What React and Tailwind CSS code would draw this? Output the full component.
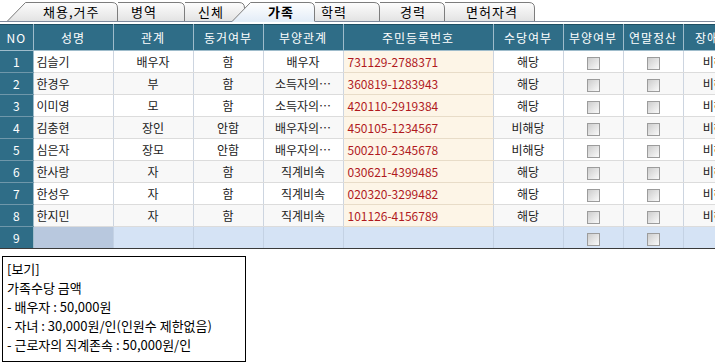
const tabs = [
  { label: '채용,거주', w: 111, pl: 36, first: true },
  { label: '병역', w: 67, pl: 13 },
  { label: '신체', w: 60, pl: 13 },
  { label: '가족', w: 83, pl: 36, active: true, ml: -13 },
  { label: '학력', w: 65, pl: 6 },
  { label: '경력', w: 65, pl: 20 },
  { label: '면허자격', w: 90, pl: 21 },
];

const rows = [
  ['김슬기', '배우자', '함', '배우자', '731129-2788371', '해당'],
  ['한경우', '부', '함', '소득자의…', '360819-1283943', '해당'],
  ['이미영', '모', '함', '소득자의…', '420110-2919384', '해당'],
  ['김충현', '장인', '안함', '배우자의…', '450105-1234567', '비해당'],
  ['심은자', '장모', '안함', '배우자의…', '500210-2345678', '비해당'],
  ['한사랑', '자', '함', '직계비속', '030621-4399485', '해당'],
  ['한성우', '자', '함', '직계비속', '020320-3299482', '해당'],
  ['한지민', '자', '함', '직계비속', '101126-4156789', '해당'],
];

const headers = ['NO', '성명', '관계', '동거여부', '부양관계', '주민등록번호', '수당여부', '부양여부', '연말정산', '장애여부'];
const widths = [33, 80, 80, 70, 80, 150, 70, 60, 60, 72];

function Tab({ tab, idx }) {
  const { w, first, active } = tab;
  const h = active ? 22 : 21;
  const slant = first || active;
  const fill = slant
    ? `M0,${h} L18,2.5 H${w - 6} Q${w - 0.5},2.5 ${w - 0.5},8 V${h} Z`
    : `M0,${h} V2.5 H${w - 6} Q${w - 0.5},2.5 ${w - 0.5},8 V${h} Z`;
  const stroke = slant
    ? `M0.5,21 L18.5,2.5 H${w - 6} Q${w - 0.5},2.5 ${w - 0.5},8 V21`
    : `M0,2.5 H${w - 6} Q${w - 0.5},2.5 ${w - 0.5},8 V21`;
  return (
    <div
      className={`relative shrink-0 ${active ? 'z-10 h-[22px] -mb-[1px]' : 'h-[21px]'}`}
      style={{ width: w, marginLeft: tab.ml || 0 }}
    >
      <svg className="absolute inset-0" width={w} height={h}>
        <defs>
          <linearGradient id={`tg${idx}`} x1="0" y1="0" x2="0" y2="1">
            <stop offset="0" stopColor={active ? '#ffffff' : '#fdfdfd'} />
            <stop offset="1" stopColor={active ? '#e2ecf7' : '#e3e3e3'} />
          </linearGradient>
        </defs>
        <path d={fill} fill={`url(#tg${idx})`} />
        <path d={stroke} fill="none" stroke="#7d7d7d" strokeWidth="1" />
      </svg>
      <span
        className={`relative block pt-[2px] leading-[19px] text-[13px] tracking-[1px] text-black ${active ? 'font-bold' : ''}`}
        style={{ paddingLeft: tab.pl }}
      >
        {tab.label}
      </span>
    </div>
  );
}

function Check() {
  return (
    <span className="inline-block align-middle w-[13px] h-[13px] border border-[#9c9c9c] bg-gradient-to-br from-[#cdcdcd] to-[#fafafa]" />
  );
}

export default function App() {
  return (
    <div className="w-[715px] h-[364px] overflow-hidden bg-white font-['Noto_Sans_CJK_KR','Noto_Sans',sans-serif] text-[12px] text-[#222]">
      {/* 탭 */}
      <div className="flex h-[22px] pl-[7px] border-b border-[#7f8a9c]">
        {tabs.map((t, i) => (
          <Tab key={t.label} tab={t} idx={i} />
        ))}
      </div>

      {/* 가족 테이블 */}
      <div className="mt-[2px] w-[715px] overflow-hidden">
        <table className="table-fixed border-collapse w-[755px]">
          <colgroup>
            {widths.map((w, i) => (
              <col key={i} style={{ width: w }} />
            ))}
          </colgroup>
          <thead>
            <tr className="h-[26px] bg-[#2f6d87] text-white">
              {headers.map((h) => (
                <th
                  key={h}
                  className="p-0 font-normal text-center whitespace-nowrap tracking-[1px] border-r border-b border-[#9fbccb] border-t border-t-[#1f4f63]"
                >
                  {h}
                </th>
              ))}
            </tr>
          </thead>
          <tbody>
            {rows.map((r, i) => (
              <tr key={i} className={`h-[22px] ${i % 2 ? 'bg-[#f8f8f8]' : 'bg-white'}`}>
                <td className="p-0 text-center text-white bg-[#2f6d87] border-r border-[#9fbccb] border-b border-b-[#6f97aa]">{i + 1}</td>
                <td className="p-0 pl-[3px] whitespace-nowrap border-r border-b border-r-[#cdd5e0] border-b-[#dcdcdc]">{r[0]}</td>
                <td className="p-0 text-center whitespace-nowrap border-r border-b border-r-[#cdd5e0] border-b-[#dcdcdc]">{r[1]}</td>
                <td className="p-0 text-center whitespace-nowrap border-r border-b border-r-[#cdd5e0] border-b-[#dcdcdc]">{r[2]}</td>
                <td className="p-0 text-center whitespace-nowrap border-r border-b border-r-[#cdd5e0] border-b-[#dcdcdc]">{r[3]}</td>
                <td className="p-0 pl-[4px] whitespace-nowrap text-[#b0191e] bg-[#fdf5e7] border-r border-b border-r-[#cdd5e0] border-b-[#e8dcc8]">{r[4]}</td>
                <td className="p-0 text-center whitespace-nowrap border-r border-b border-r-[#cdd5e0] border-b-[#dcdcdc]">{r[5]}</td>
                <td className="p-0 text-center border-r border-b border-r-[#cdd5e0] border-b-[#dcdcdc]"><Check /></td>
                <td className="p-0 text-center border-r border-b border-r-[#cdd5e0] border-b-[#dcdcdc]"><Check /></td>
                <td className="p-0 text-center whitespace-nowrap border-b border-b-[#dcdcdc]">비해당</td>
              </tr>
            ))}
            <tr className="h-[22px] bg-[#d5e3f5]">
              <td className="p-0 text-center text-white bg-[#2f6d87] border-r border-[#9fbccb] border-b border-b-[#3a3a3a]">9</td>
              <td className="p-0 bg-[#b8c8de] border-r border-b border-r-[#c4d2e4] border-b-[#3a3a3a]"></td>
              <td className="p-0 border-r border-b border-r-[#c4d2e4] border-b-[#3a3a3a]"></td>
              <td className="p-0 border-r border-b border-r-[#c4d2e4] border-b-[#3a3a3a]"></td>
              <td className="p-0 border-r border-b border-r-[#c4d2e4] border-b-[#3a3a3a]"></td>
              <td className="p-0 border-r border-b border-r-[#c4d2e4] border-b-[#3a3a3a]"></td>
              <td className="p-0 border-r border-b border-r-[#c4d2e4] border-b-[#3a3a3a]"></td>
              <td className="p-0 text-center border-r border-b border-r-[#c4d2e4] border-b-[#3a3a3a]"><Check /></td>
              <td className="p-0 text-center border-r border-b border-r-[#c4d2e4] border-b-[#3a3a3a]"><Check /></td>
              <td className="p-0 border-b border-b-[#3a3a3a]"></td>
            </tr>
          </tbody>
        </table>
      </div>

      {/* 보기 */}
      <div className="mt-[7px] ml-[2px] w-[244px] h-[106px] border border-black pl-[4px] pt-[2px] text-[13px] leading-[19px] text-black">
        <div>[보기]</div>
        <div>가족수당 금액</div>
        <div>- 배우자 : 50,000원</div>
        <div>- 자녀 : 30,000원/인(인원수 제한없음)</div>
        <div>- 근로자의 직계존속 : 50,000원/인</div>
      </div>
    </div>
  );
}
